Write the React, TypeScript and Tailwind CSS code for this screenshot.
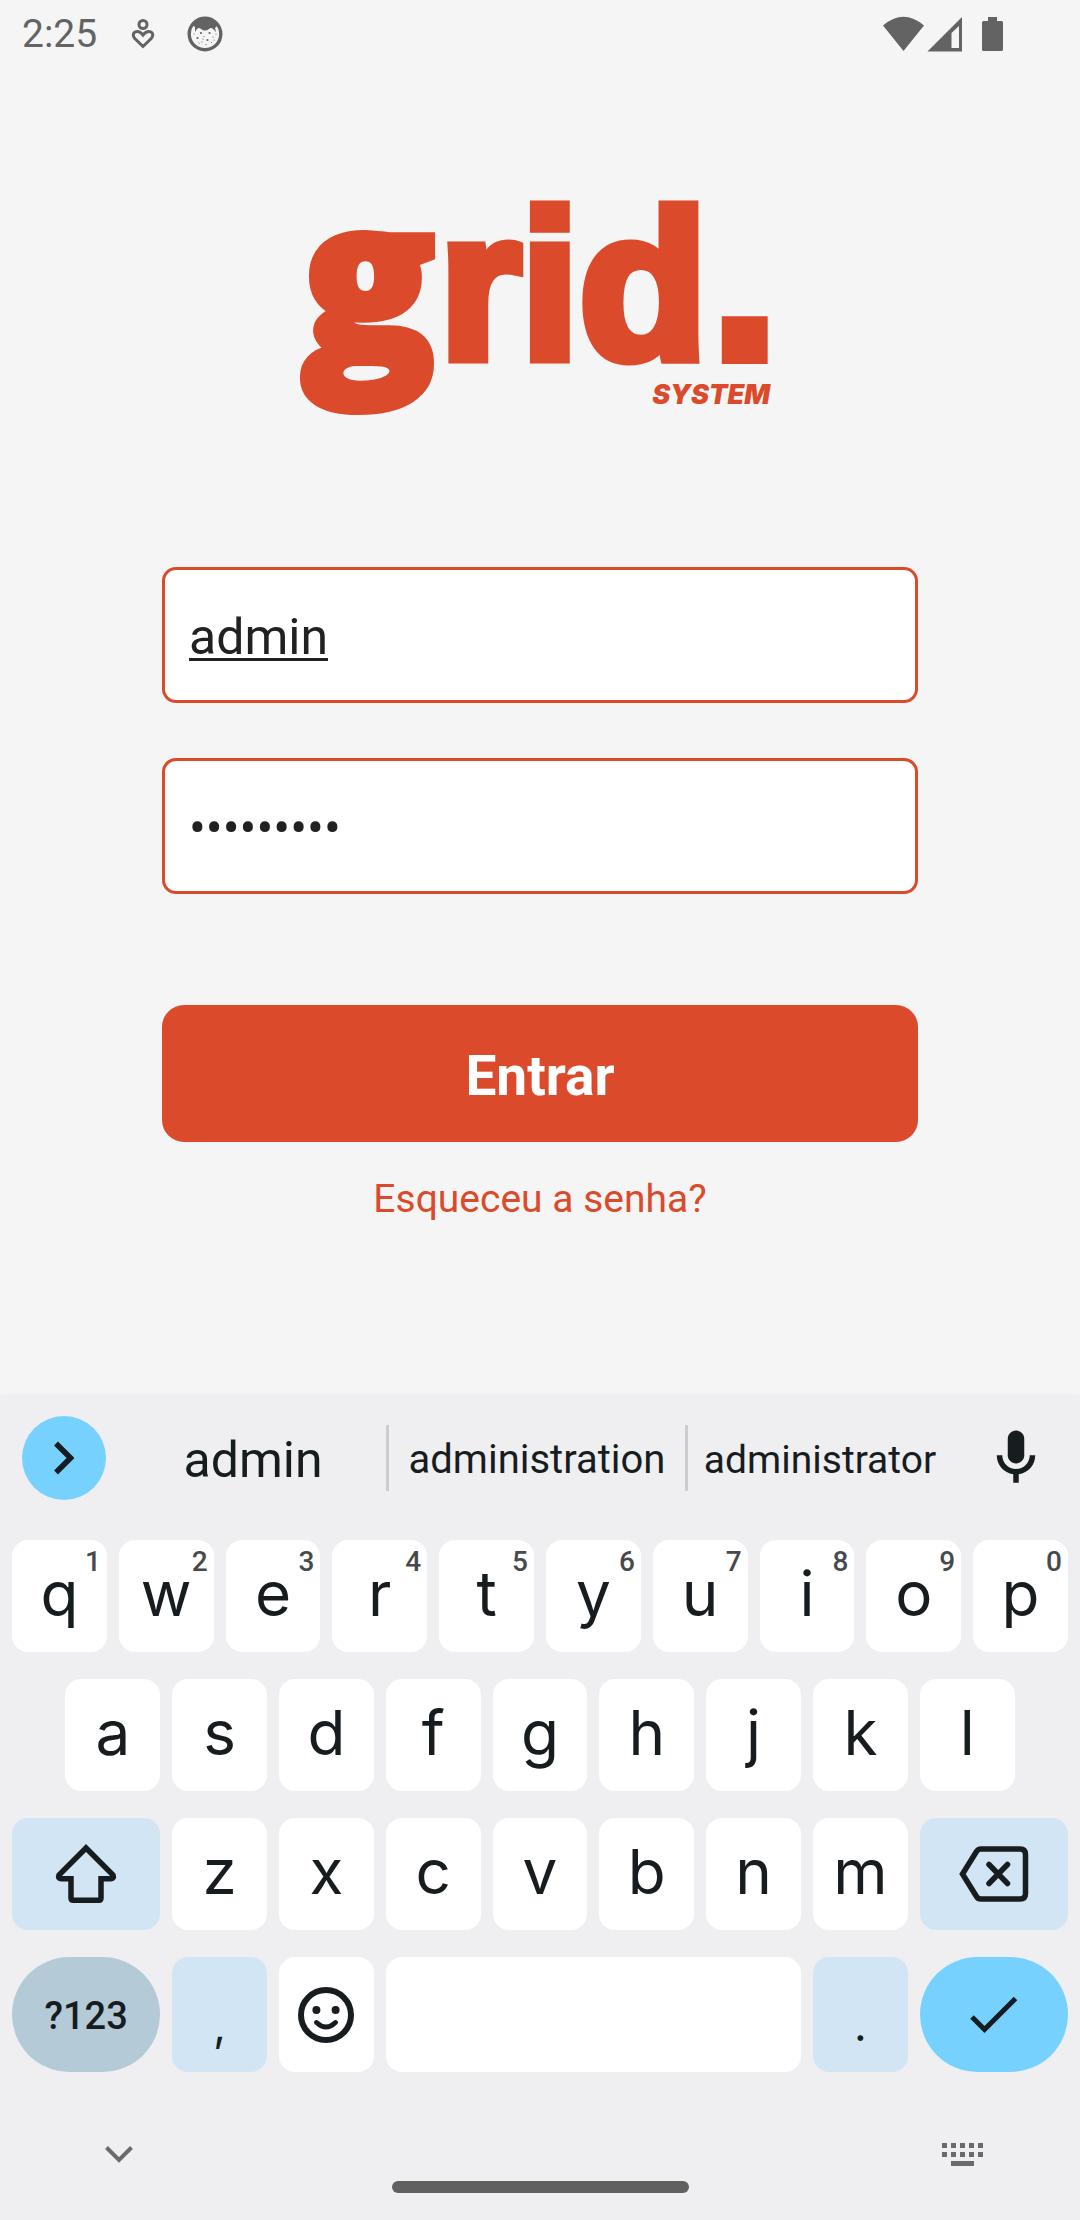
import React from "react";

const TOP_ROW = "qwertyuiop".split("");
const HOME_ROW = "asdfghjkl".split("");
const BOTTOM_ROW = "zxcvbnm".split("");

function StatusBar() {
  return (
    <header className="flex h-[68px] items-center justify-between pl-[22px] pr-[76px] text-[#636363]">
      <div className="flex items-center">
        <time className="text-[39px] leading-[68px]">2:25</time>
        <svg className="ml-[34px] h-8 w-6" viewBox="0 0 24 32" fill="none" stroke="currentColor" strokeWidth="3" aria-hidden="true">
          <circle cx="12" cy="6.5" r="4" />
          <path d="M12 28.5 L3.8 20.5 Q0.6 16.5 4 14 Q8 12 12 17 Q16 12 20 14 Q23.4 16.5 20.2 20.5 Z" />
        </svg>
        <svg className="ml-8 h-9 w-9" viewBox="0 0 36 36" aria-hidden="true">
          <circle cx="18" cy="18" r="15.800" fill="none" stroke="currentColor" strokeWidth="3.400" />
          <path d="M5 9 Q18 -3 31 9 L28 12 L29 16 L26 13 Q24 11 22 13 Q18 16 14 13 Q12 11 10 13 L8 16 L8 11 Z" fill="currentColor" />
          <g fill="currentColor">
            <circle cx="14" cy="17" r="1.1" />
            <circle cx="22.500" cy="17" r="1.1" />
            <circle cx="10.500" cy="22" r="1.1" />
            <circle cx="20.500" cy="24" r="1.1" />
            <circle cx="7" cy="18" r="0.6" />
            <circle cx="17" cy="20.500" r="0.6" />
            <circle cx="26" cy="21" r="0.6" />
            <circle cx="29" cy="18" r="0.6" />
            <circle cx="15" cy="26" r="0.6" />
            <circle cx="12" cy="27" r="0.6" />
            <circle cx="19" cy="28.500" r="0.6" />
            <circle cx="24.500" cy="26.500" r="0.6" />
            <circle cx="27" cy="24" r="0.6" />
            <circle cx="16" cy="23" r="0.6" />
          </g>
        </svg>
      </div>
      <svg className="h-9 w-[122px]" viewBox="0 0 122 36" fill="currentColor" aria-label="Wi-Fi, sinal e bateria">
        <path d="M21.500 35 L1 9.500 Q21.500 -8 42 9.500 Z" />
        <path fillRule="evenodd" d="M80 1 V35.500 H45.500 Z M77 10 L69.500 17 V32 H77 Z" />
        <path d="M106 1 h9 v4 h4.500 q1.500 0 1.500 1.500 v27 q0 1.500 -1.500 1.500 h-18 q-1.500 0 -1.500 -1.500 v-27 q0 -1.500 1.500 -1.500 h4.500 z" />
      </svg>
    </header>
  );
}

function Logo() {
  return (
    <div className="flex flex-col items-end text-[#db4b2b]" role="img" aria-label="grid. system">
      <div className="flex h-[160px] items-baseline leading-[160px]">
        <span className="mr-1 font-['Open_Sans',sans-serif] text-[220px] font-extrabold [-webkit-text-stroke:8px_#db4b2b]">g</span>
        <span className="font-['Liberation_Sans',sans-serif] text-[210px] font-bold [-webkit-text-stroke:11px_#db4b2b]">rid</span>
        <span className="ml-1 font-['Liberation_Sans',sans-serif] text-[240px] font-bold [-webkit-text-stroke:12px_#db4b2b]">.</span>
      </div>
      <span className="mt-7 pr-2 font-['Inter',sans-serif] text-[27px] font-black italic leading-7">SYSTEM</span>
    </div>
  );
}

function LoginForm() {
  const field =
    "block h-[136px] w-full rounded-[14px] border-[3px] border-[#db4b2b] bg-white px-6 pt-1 text-[50px] text-[#212121] outline-none";
  return (
    <form className="flex w-[70%] flex-col items-center" onSubmit={(e) => e.preventDefault()}>
      <input className={`${field} underline decoration-[3px] underline-offset-4`} aria-label="Usuário" defaultValue="admin" spellCheck={false} />
      <input className={`${field} mt-[55px]`} type="password" aria-label="Senha" defaultValue="admin1234" />
      <button type="submit" className="mt-[111px] h-[137px] w-full rounded-[22px] bg-[#db4b2b] pt-[6px] text-[55px] font-bold text-white">
        Entrar
      </button>
      <a href="#senha" className="mt-[33px] text-[39px] leading-[48px] text-[#db4b2b]">
        Esqueceu a senha?
      </a>
    </form>
  );
}

function Suggestions() {
  return (
    <div className="grid h-[124px] grid-cols-[120px_266fr_302fr_264fr_128px] items-center">
      <button className="ml-[22px] flex size-[84px] items-center justify-center rounded-full bg-[#76d1ff]" aria-label="Expandir">
        <svg className="h-[34px] w-5" viewBox="0 0 20 34" fill="none" stroke="currentColor" strokeWidth="5.5" aria-hidden="true">
          <path d="M2 2.500 L16.500 17 L2 31.500" />
        </svg>
      </button>
      <button className="h-[66px] pt-1 text-[50px] leading-[62px]">admin</button>
      <button className="h-[66px] border-x-[3px] border-[#cbccce] pt-1 text-[40px] leading-[62px]">administration</button>
      <button className="h-[66px] pt-1 text-[39px] leading-[62px]">administrator</button>
      <button className="flex items-center justify-center" aria-label="Entrada de voz">
        <svg className="size-[66px]" viewBox="0 0 24 24" fill="currentColor" aria-hidden="true">
          <path d="M12 14c1.66 0 3-1.340 3-3V5c0-1.660-1.340-3-3-3S9 3.340 9 5v6c0 1.660 1.340 3 3 3z" />
          <path d="M17 11c0 2.760-2.240 5-5 5s-5-2.240-5-5H5c0 3.530 2.610 6.430 6 6.920V21h2v-3.080c3.390-.49 6-3.390 6-6.920h-2z" />
        </svg>
      </button>
    </div>
  );
}

function LetterKey({ letter, digit, className = "" }: { letter: string; digit?: number; className?: string }) {
  return (
    <button className={`relative col-span-2 h-28 rounded-2xl bg-white pb-1 font-['Inter',sans-serif] text-[62px] leading-none ${className}`}>
      {letter}
      {digit !== undefined && (
        <span className="absolute right-[6px] top-2 font-['Roboto',sans-serif] text-[28px] font-medium leading-7 text-[#474a4d]">{digit}</span>
      )}
    </button>
  );
}

function Keyboard() {
  return (
    <section className="bg-[#efeff2] text-[#171c1f] shadow-[0_-1px_6px_rgba(0,0,0,0.04)]" aria-label="Teclado">
      <Suggestions />
      <div className="mt-5 grid grid-cols-20 gap-x-3 gap-y-[27px] px-3">
        {TOP_ROW.map((l, i) => (
          <LetterKey key={l} letter={l} digit={(i + 1) % 10} />
        ))}
        {HOME_ROW.map((l, i) => (
          <LetterKey key={l} letter={l} className={i === 0 ? "col-start-2" : ""} />
        ))}
        <button className="col-span-3 col-start-1 flex h-28 items-center justify-center rounded-2xl bg-[#d2e5f4]" aria-label="Shift">
          <svg className="h-[60px] w-[62px]" viewBox="0 0 62 60" fill="none" stroke="currentColor" strokeWidth="5.5" aria-hidden="true">
            <path d="M31 4 L4 31 Q2.600 34.700 6 34.700 H16 V54 Q16 56.300 18 56.300 H44 Q46 56.300 46 54 V34.700 H56 Q59.400 34.700 58 31 Z" />
          </svg>
        </button>
        {BOTTOM_ROW.map((l) => (
          <LetterKey key={l} letter={l} />
        ))}
        <button className="col-span-3 flex h-28 items-center justify-center rounded-2xl bg-[#d2e5f4]" aria-label="Apagar">
          <svg className="h-14 w-[70px]" viewBox="0 0 70 56" fill="none" stroke="currentColor" strokeWidth="5.5" aria-hidden="true">
            <path d="M3.500 28 L17.500 5.500 Q19 3 22 3 H61 Q66.500 3 66.500 8.500 V47.500 Q66.500 53 61 53 H22 Q19 53 17.500 50.500 Z" />
            <path strokeLinecap="round" d="M30 18.500 L48.500 37.500 M48.500 18.500 L30 37.500" />
          </svg>
        </button>
        <button className="col-span-3 h-[115px] rounded-full bg-[#b4cad6] pt-1 text-[38px] font-medium">?123</button>
        <button className="col-span-2 h-[115px] rounded-2xl bg-[#d2e5f4] pt-5 font-['Inter',sans-serif] text-[44px] leading-none">,</button>
        <button className="col-span-2 flex h-[115px] items-center justify-center rounded-2xl bg-white" aria-label="Emoji">
          <svg className="size-14" viewBox="0 0 56 56" aria-hidden="true">
            <circle cx="28" cy="28" r="25" fill="none" stroke="currentColor" strokeWidth="6" />
            <circle cx="18.400" cy="23" r="4" fill="currentColor" />
            <circle cx="37.600" cy="23" r="4" fill="currentColor" />
            <path d="M18.500 35.500 Q28 44.500 37.500 35.500" fill="none" stroke="currentColor" strokeWidth="4.800" strokeLinecap="round" />
          </svg>
        </button>
        <button className="col-span-8 h-[115px] rounded-2xl bg-white" aria-label="Espaço" />
        <button className="col-span-2 h-[115px] rounded-2xl bg-[#d2e5f4] pt-5 font-['Inter',sans-serif] text-[44px] leading-none">.</button>
        <button className="col-span-3 flex h-[115px] items-center justify-center rounded-full bg-[#76d1ff]" aria-label="Concluir">
          <svg className="h-[38px] w-[50px]" viewBox="0 0 50 38" fill="none" stroke="currentColor" strokeWidth="5" aria-hidden="true">
            <path d="M3 21 L15.500 33.500 L46.500 2.500" />
          </svg>
        </button>
      </div>
      <nav className="grid h-[148px] grid-cols-[1fr_auto_1fr] text-[#6a6a6a]">
        <button className="ml-[105px] mt-[74px] h-[18px] w-7 self-start" aria-label="Ocultar teclado">
          <svg className="h-[18px] w-7" viewBox="0 0 28 18" fill="none" stroke="currentColor" strokeWidth="4" aria-hidden="true">
            <path d="M1.500 1.500 L14 14 L26.500 1.500" />
          </svg>
        </button>
        <div className="mb-[27px] h-3 w-[297px] self-end rounded-full bg-[#606060]" />
        <button className="mr-24 mt-[71px] h-6 w-[42px] self-start justify-self-end" aria-label="Trocar teclado">
          <svg className="h-6 w-[42px]" viewBox="0 0 42 24" fill="currentColor" aria-hidden="true">
            {[0, 9, 18, 27, 36].map((x) => (
              <React.Fragment key={x}>
                <rect x={x} y="0" width="5" height="5" />
                <rect x={x} y="9" width="5" height="5" />
              </React.Fragment>
            ))}
            <rect x="9" y="18" width="23" height="5" />
          </svg>
        </button>
      </nav>
    </section>
  );
}

export default function App() {
  return (
    <div className="flex min-h-screen flex-col bg-[#f5f5f5] font-['Roboto',sans-serif]">
      <StatusBar />
      <main className="flex flex-1 flex-col items-center pt-[125px]">
        <Logo />
        <div className="mt-[158px] flex w-full justify-center">
          <LoginForm />
        </div>
      </main>
      <Keyboard />
    </div>
  );
}
